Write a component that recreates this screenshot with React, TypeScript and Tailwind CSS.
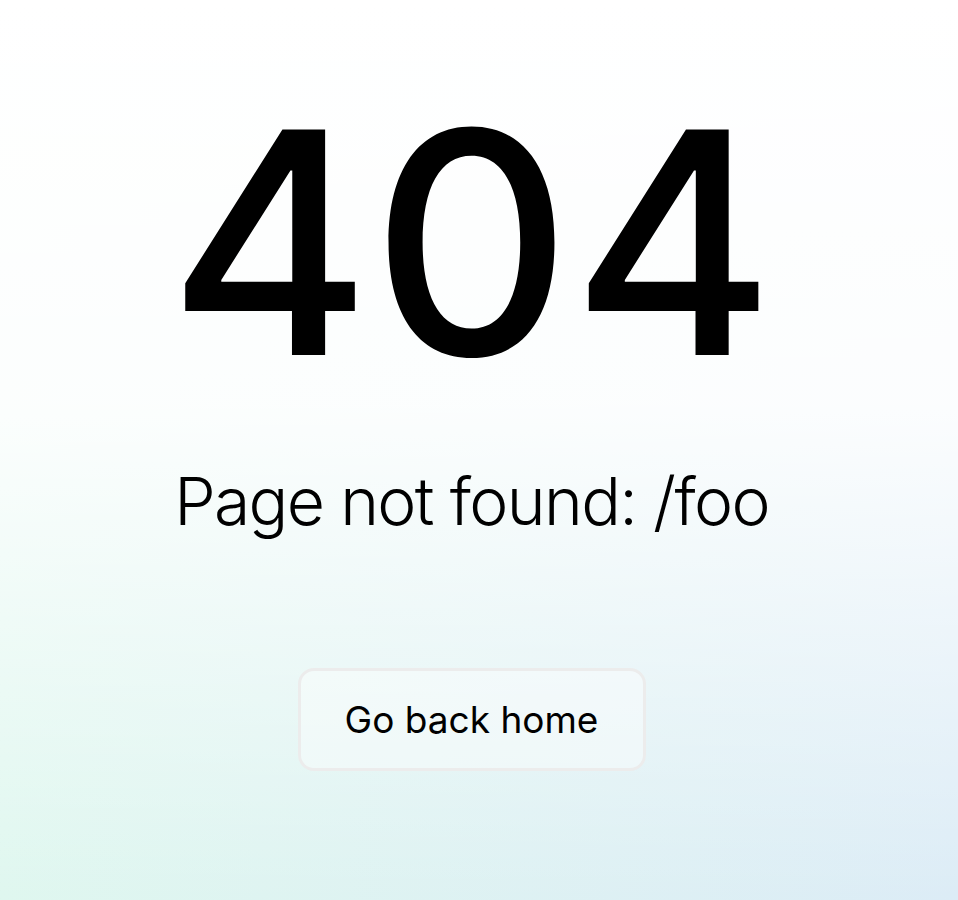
export default function App() {
  return (
    <div className="min-h-screen bg-gradient-to-r from-[#dff7ef] to-[#dcecf6]">
      <div
        className="min-h-screen flex flex-col items-center pr-[15px] bg-gradient-to-b from-white via-white/90 via-45% to-white/0 text-black"
        style={{ fontFamily: "Inter, 'Noto Sans', sans-serif" }}
      >
        <h1 className="mt-[88px] text-[310px] leading-none font-medium">404</h1>
        <p className="mt-[70px] text-[66px] leading-none font-light tracking-tight">Page not found: /foo</p>
        <button className="mt-[134px] w-[348px] h-[103px] rounded-2xl border-[3px] border-[#ececec] bg-white/40 text-[37px] font-normal">
          Go back home
        </button>
      </div>
    </div>
  );
}
